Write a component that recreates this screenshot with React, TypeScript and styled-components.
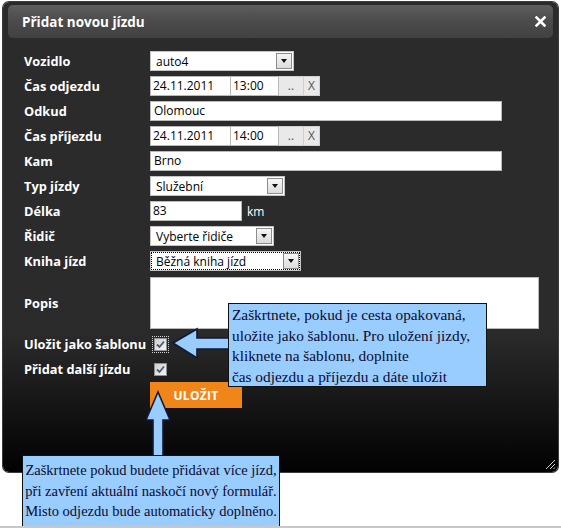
import React from 'react';
import styled, { createGlobalStyle } from 'styled-components';

const Global = createGlobalStyle`
  html, body { margin: 0; padding: 0; background: #ffffff; }
  body { font-family: "Open Sans", "DejaVu Sans", sans-serif; }
  * { box-sizing: border-box; }
`;

const Page = styled.div`
  position: relative;
  width: 561px;
  height: 528px;
  overflow: hidden;
  padding: 2px 3px 0 3px;
  border-bottom: 2px solid #c8c8c8;
`;

const Dialog = styled.div`
  position: relative;
  width: 555px;
  height: 470px;
  border-radius: 6px;
  padding: 3px 5px 0 5px;
  background: linear-gradient(to bottom, #2b2b2b 0px, #2b2b2b 330px, #020202 468px);
  box-shadow: 0 0 0 1px #3c3c3c;
  display: flex;
  flex-direction: column;
`;

const Header = styled.div`
  height: 33px;
  border-radius: 5px;
  background: linear-gradient(to bottom, #5e5e5e 0%, #4c4c4c 45%, #414141 100%);
  display: flex;
  align-items: center;
  justify-content: space-between;
  padding: 0 7px 0 14px;
`;

const Title = styled.div`
  color: #ffffff;
  font-weight: 700;
  font-size: 13.5px;
`;

const Form = styled.div`
  display: grid;
  grid-template-columns: 126px auto;
  row-gap: 5px;
  align-items: center;
  padding: 13px 0 0 16px;
`;

const Label = styled.div`
  color: #ffffff;
  font-weight: 700;
  font-size: 12.8px;
  line-height: 20px;
  white-space: nowrap;
`;

const Field = styled.div<{ $mt?: number }>`
  display: flex;
  align-items: center;
  margin-top: ${(p) => p.$mt ?? 0}px;
`;

const TextInput = styled.div<{ $w: number }>`
  width: ${(p) => p.$w}px;
  height: 20px;
  background: #ffffff;
  border: 1px solid #b9b9b9;
  color: #000;
  font-size: 12px;
  line-height: 18px;
  padding: 0 2px;
  white-space: nowrap;
  overflow: hidden;
`;

const TextArea = styled.div`
  width: 389px;
  height: 52px;
  background: #ffffff;
  border: 1px solid #b9b9b9;
`;

const SelectBox = styled.div<{ $w: number; $focus?: boolean }>`
  width: ${(p) => p.$w}px;
  height: 20px;
  background: #ffffff;
  border: 1px solid #c4c4c4;
  display: flex;
  align-items: center;
  padding: 1px;
  outline: ${(p) => (p.$focus ? '1px dotted #000' : 'none')};
  outline-offset: -2px;
`;

const SelectValue = styled.div`
  flex: 1;
  font-size: 12px;
  color: #000;
  padding-left: 4px;
  white-space: nowrap;
`;

const ArrowBtn = styled.div`
  width: 16px;
  height: 16px;
  border: 1px solid #8c8c8c;
  background: linear-gradient(to bottom, #f6f6f6, #dcdcdc);
  display: flex;
  align-items: center;
  justify-content: center;
  &::after {
    content: '';
    border-left: 3.5px solid transparent;
    border-right: 3.5px solid transparent;
    border-top: 4px solid #111;
  }
`;

const SmallBtn = styled.div<{ $w: number }>`
  width: ${(p) => p.$w}px;
  height: 20px;
  background: #e9e9e9;
  border: 1px solid #d0d0d0;
  border-left: none;
  color: #555;
  font-size: 12px;
  line-height: 18px;
  text-align: center;
`;

const Unit = styled.span`
  color: #fff;
  font-size: 12px;
  margin-left: 5px;
`;

const CheckWrap = styled.div<{ $focus?: boolean }>`
  width: 13px;
  height: 13px;
  margin-left: 4px;
  border: 1px solid #8f8f8f;
  background: linear-gradient(135deg, #cfcfcf, #f4f4f4);
  outline: ${(p) => (p.$focus ? '1px dotted #d0d0d0' : 'none')};
  outline-offset: 1px;
  display: flex;
  align-items: center;
  justify-content: center;
`;

const SaveBtn = styled.div`
  width: 92px;
  height: 26px;
  background: #f08619;
  color: #fff;
  font-weight: 700;
  font-size: 12px;
  display: flex;
  align-items: center;
  justify-content: center;
  letter-spacing: 0.3px;
`;

const Grip = styled.svg`
  position: absolute;
  right: 2px;
  bottom: 2px;
`;

const Callout = styled.div<{ $x: number; $y: number; $w: number; $h: number; $size: number; $center?: boolean }>`
  position: absolute;
  left: ${(p) => p.$x}px;
  top: ${(p) => p.$y}px;
  width: ${(p) => p.$w}px;
  height: ${(p) => p.$h}px;
  background: #99ccff;
  border: 1px solid #111;
  color: #0b0b2e;
  font-family: "Liberation Serif", "Times New Roman", serif;
  font-size: ${(p) => p.$size}px;
  line-height: 20.7px;
  padding: ${(p) => (p.$center ? '4px 2px 0 2px' : '1px 3px 0 3px')};
  text-align: ${(p) => (p.$center ? 'center' : 'left')};
  white-space: nowrap;
`;

const ArrowSvg = styled.svg`
  position: absolute;
  left: 0;
  top: 0;
  pointer-events: none;
`;

const Check = ({ focus }: { focus?: boolean }) => (
  <CheckWrap $focus={focus}>
    <svg width="9" height="9" viewBox="0 0 9 9">
      <path d="M1 4.5 L3.5 7 L8 1.5" fill="none" stroke="#4a5a74" strokeWidth="1.8" />
    </svg>
  </CheckWrap>
);

const Select = ({ w, value, focus }: { w: number; value: string; focus?: boolean }) => (
  <SelectBox $w={w} $focus={focus}>
    <SelectValue>{value}</SelectValue>
    <ArrowBtn />
  </SelectBox>
);

const DateTime = ({ date, time }: { date: string; time: string }) => (
  <Field>
    <TextInput $w={81}>{date}</TextInput>
    <TextInput $w={48} style={{ borderLeft: 'none' }}>{time}</TextInput>
    <SmallBtn $w={25}>..</SmallBtn>
    <SmallBtn $w={16}>X</SmallBtn>
  </Field>
);

export default function App() {
  return (
    <>
      <Global />
      <Page>
        <Dialog>
          <Header>
            <Title>Přidat novou jízdu</Title>
            <svg width="11" height="11" viewBox="0 0 11 11">
              <path d="M1.5 1.5 L9.5 9.5 M9.5 1.5 L1.5 9.5" stroke="#fff" strokeWidth="2.6" strokeLinecap="square" />
            </svg>
          </Header>
          <Form>
            <Label>Vozidlo</Label>
            <Field><Select w={144} value="auto4" /></Field>

            <Label>Čas odjezdu</Label>
            <DateTime date="24.11.2011" time="13:00" />

            <Label>Odkud</Label>
            <Field><TextInput $w={352} style={{ paddingLeft: 3 }}>Olomouc</TextInput></Field>

            <Label>Čas příjezdu</Label>
            <DateTime date="24.11.2011" time="14:00" />

            <Label>Kam</Label>
            <Field><TextInput $w={352} style={{ paddingLeft: 3 }}>Brno</TextInput></Field>

            <Label>Typ jízdy</Label>
            <Field><Select w={135} value="Služební" /></Field>

            <Label>Délka</Label>
            <Field>
              <TextInput $w={92}>83</TextInput>
              <Unit>km</Unit>
            </Field>

            <Label>Řidič</Label>
            <Field><Select w={124} value="Vyberte řidiče" /></Field>

            <Label>Kniha jízd</Label>
            <Field><Select w={151} value="Běžná kniha jízd" focus /></Field>

            <Label>Popis</Label>
            <Field $mt={1}><TextArea /></Field>

            <Label>Uložit jako šablonu</Label>
            <Field><Check focus /></Field>

            <Label>Přidat další jízdu</Label>
            <Field><Check /></Field>

            <div />
            <Field $mt={-2}><SaveBtn>ULOŽIT</SaveBtn></Field>
          </Form>
          <Grip width="12" height="12" viewBox="0 0 12 12">
            <path d="M11 2 L2 11 M11 6 L6 11 M11 9.5 L9.5 11" stroke="#cfcfcf" strokeWidth="1" />
          </Grip>
        </Dialog>

        <ArrowSvg width="561" height="528">
          <polygon
            points="173,343 197,329 197,338 230,338 230,349 197,349 197,358"
            fill="#99ccff"
            stroke="#111a33"
            strokeWidth="1.6"
            strokeLinejoin="miter"
          />
          <polygon
            points="158,392 170,420 163,420 163,457 153,457 153,420 146,420"
            fill="#99ccff"
            stroke="#111a33"
            strokeWidth="1.6"
          />
        </ArrowSvg>

        <Callout $x={228} $y={303} $w={259} $h={84} $size={15.3}>
          Zaškrtnete, pokud je cesta opakovaná,<br />
          uložite jako šablonu. Pro uložení jizdy,<br />
          kliknete na šablonu, doplnite<br />
          čas odjezdu a příjezdu a dáte uložit
        </Callout>

        <Callout $x={22} $y={455} $w={258} $h={72} $size={14.5} $center>
          Zaškrtnete pokud budete přidávat více jízd,<br />
          při zavření aktuální naskočí nový formulář.<br />
          Misto odjezdu bude automaticky doplněno.
        </Callout>
      </Page>
    </>
  );
}
